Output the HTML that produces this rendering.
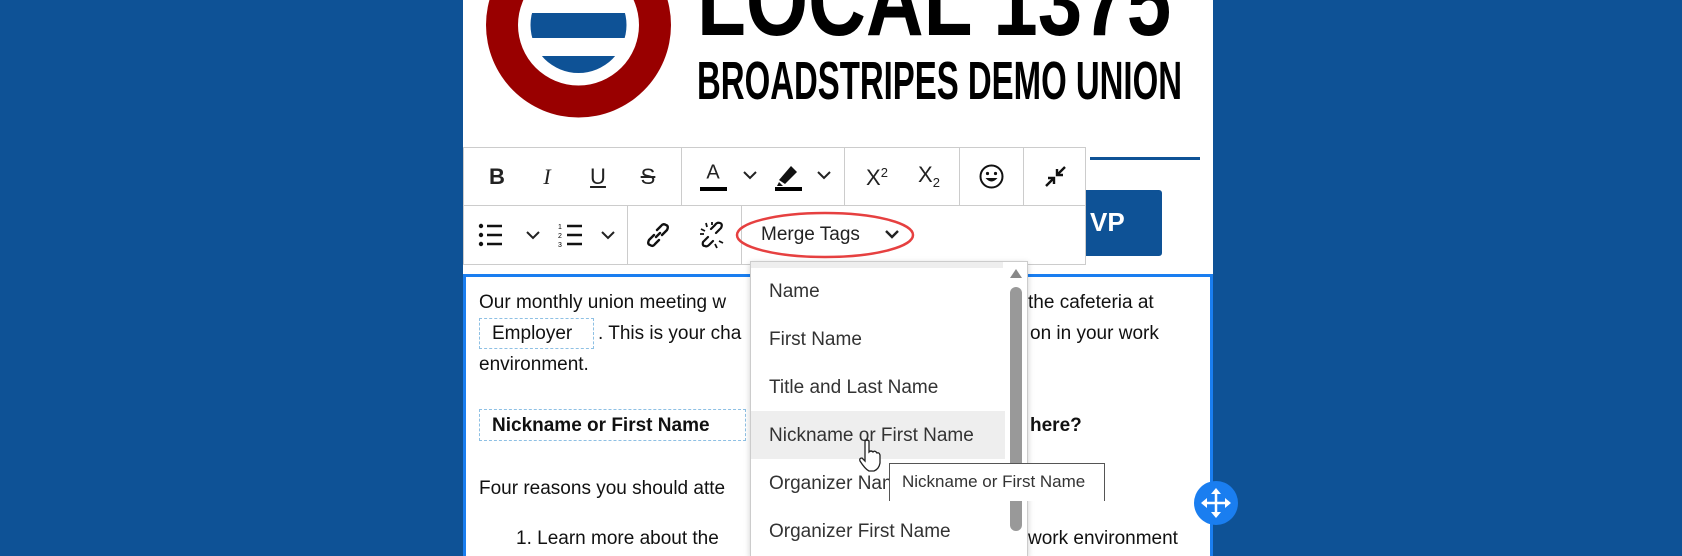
<!DOCTYPE html>
<html style="overflow:hidden;height:556px"><head><meta charset="utf-8"><style>
body{margin:0;width:1682px;height:556px;background:#0e5296;position:relative;overflow:hidden;font-family:"Liberation Sans",Arial,sans-serif}
.col{position:absolute;left:463px;top:0;width:750px;height:556px;background:#fff}
.abs{position:absolute}
.tb{position:absolute;background:#fff;border:1px solid #ccc;box-sizing:border-box}
.ic{position:absolute;font-size:22px;color:#222;transform:translate(-50%,-50%);white-space:nowrap}
.txt{position:absolute;font-size:19px;color:#111;white-space:nowrap}
.tag{position:absolute;border:1px dashed #8ec0e4;box-sizing:border-box}
.item{position:absolute;left:769px;font-size:19px;color:#333;white-space:nowrap;font-family:"Liberation Sans","DejaVu Sans",sans-serif}
</style></head><body>
<div class="col"></div>
<svg class="abs" style="left:0;top:0" width="1682" height="556">
 <circle cx="578.5" cy="25" r="92.5" fill="#990000"/>
 <circle cx="578.5" cy="25" r="60.5" fill="#fff"/>
 <clipPath id="c"><circle cx="578.5" cy="25" r="48"/></clipPath>
 <g clip-path="url(#c)" fill="#0e5296"><rect x="520" y="13" width="120" height="25"/><rect x="520" y="56" width="120" height="30"/></g>
 <rect x="1090" y="157" width="110" height="3" fill="#0e5296"/>
 <rect x="1060" y="190" width="102" height="66" rx="3" fill="#0e5296"/>
</svg>
<div class="abs" style="left:697px;top:-56px;font-size:100px;font-weight:bold;transform:scaleX(0.8);transform-origin:left top;white-space:nowrap">LOCAL 1375</div>
<div class="abs" style="left:697px;top:50px;font-size:54px;font-weight:bold;transform:scaleX(0.61);transform-origin:left top;white-space:nowrap">BROADSTRIPES DEMO UNION</div>
<div class="abs" style="left:1090px;top:207px;color:#fff;font-weight:bold;font-size:26px">VP</div>

<div class="abs" style="left:463px;top:274px;width:750px;height:282px;border:3px solid #1a7ef0;border-bottom:none;box-sizing:border-box"></div>
<div class="txt" style="left:479px;top:292px">Our monthly union meeting w</div>
<div class="txt" style="left:1028px;top:292px">the cafeteria at</div>
<div class="tag" style="left:479px;top:318px;width:115px;height:31px"></div>
<div class="txt" style="left:492px;top:323px">Employer</div>
<div class="txt" style="left:598px;top:323px">. This is your cha</div>
<div class="txt" style="left:1030px;top:323px">on in your work</div>
<div class="txt" style="left:479px;top:354px">environment.</div>
<div class="tag" style="left:479px;top:409px;width:267px;height:32px"></div>
<div class="txt" style="left:492px;top:415px;font-weight:bold">Nickname or First Name</div>
<div class="txt" style="left:1030px;top:415px;font-weight:bold">here?</div>
<div class="txt" style="left:479px;top:478px">Four reasons you should atte</div>
<div class="txt" style="left:516px;top:528px">1. Learn more about the </div>
<div class="txt" style="left:1028px;top:528px">work environment</div>

<div class="tb" style="left:463px;top:147px;width:623px;height:59px"></div>
<div class="tb" style="left:463px;top:205px;width:623px;height:60px"></div>
<div class="abs" style="left:681px;top:147px;width:1px;height:58px;background:#ccc"></div>
<div class="abs" style="left:844px;top:147px;width:1px;height:58px;background:#ccc"></div>
<div class="abs" style="left:959px;top:147px;width:1px;height:58px;background:#ccc"></div>
<div class="abs" style="left:1023px;top:147px;width:1px;height:58px;background:#ccc"></div>
<div class="abs" style="left:627px;top:205px;width:1px;height:59px;background:#ccc"></div>
<div class="abs" style="left:741px;top:205px;width:1px;height:59px;background:#ccc"></div>

<div class="ic" style="left:497px;top:177px;font-weight:bold">B</div>
<div class="ic" style="left:547px;top:177px;font-family:'Liberation Serif';font-style:italic">I</div>
<div class="ic" style="left:598px;top:177px;text-decoration:underline">U</div>
<div class="ic" style="left:648px;top:177px;text-decoration:line-through">S</div>
<div class="ic" style="left:713px;top:173px;font-size:20px">A</div>
<div class="abs" style="left:700px;top:187px;width:27px;height:4px;background:#000"></div>
<svg class="abs" style="left:742px;top:170px" width="16" height="10"><path d="M2 2 L8 8 L14 2" stroke="#222" stroke-width="2" fill="none"/></svg>
<svg class="abs" style="left:775px;top:160px" width="28" height="32"><path d="M4 20 L16 6 L22 12 L10 24 Z" fill="#111"/><path d="M4 22 L2 26 L8 26 Z" fill="#111"/><rect x="0" y="27" width="27" height="4" fill="#000"/></svg>
<svg class="abs" style="left:816px;top:170px" width="16" height="10"><path d="M2 2 L8 8 L14 2" stroke="#222" stroke-width="2" fill="none"/></svg>
<div class="ic" style="left:877px;top:178px">X<sup style="font-size:13px">2</sup></div>
<div class="ic" style="left:929px;top:176px">X<sub style="font-size:13px">2</sub></div>
<svg class="abs" style="left:979px;top:164px" width="25" height="25"><circle cx="12.5" cy="12.5" r="11" fill="none" stroke="#111" stroke-width="2"/><circle cx="8.5" cy="9.5" r="1.6" fill="#111"/><circle cx="16.5" cy="9.5" r="1.6" fill="#111"/><path d="M6.5 14 Q12.5 21 18.5 14 Z" fill="#111"/></svg>
<svg class="abs" style="left:1043px;top:164px" width="25" height="25"><path d="M22 3 L14 11 M14 5 V11 H20 M3 22 L11 14 M5 14 H11 V20" stroke="#111" stroke-width="2.4" fill="none"/></svg>

<svg class="abs" style="left:478px;top:223px" width="26" height="24"><circle cx="3" cy="3" r="2.2" fill="#111"/><circle cx="3" cy="12" r="2.2" fill="#111"/><circle cx="3" cy="21" r="2.2" fill="#111"/><path d="M9 3H24M9 12H24M9 21H24" stroke="#111" stroke-width="2.4"/></svg>
<svg class="abs" style="left:525px;top:230px" width="16" height="10"><path d="M2 2 L8 8 L14 2" stroke="#222" stroke-width="2" fill="none"/></svg>
<svg class="abs" style="left:558px;top:222px" width="26" height="26"><text x="0" y="7" font-size="7" font-family="Liberation Sans">1</text><text x="0" y="16" font-size="7" font-family="Liberation Sans">2</text><text x="0" y="25" font-size="7" font-family="Liberation Sans">3</text><path d="M9 4H24M9 13H24M9 22H24" stroke="#111" stroke-width="2.4"/></svg>
<svg class="abs" style="left:600px;top:230px" width="16" height="10"><path d="M2 2 L8 8 L14 2" stroke="#222" stroke-width="2" fill="none"/></svg>
<svg class="abs" style="left:645px;top:222px" width="26" height="26"><path d="M11 15 L15 11 M9 13 L4 18 Q2 22 5 23 Q8 25 10 22 L14 18 M17 13 L22 8 Q24 4 21 3 Q18 1 16 4 L12 8" stroke="#111" stroke-width="2.4" fill="none" stroke-linecap="round"/></svg>
<svg class="abs" style="left:698px;top:221px" width="28" height="28"><path d="M10 16 L5 21 Q4 25 7 25 Q9 26 11 24 L15 20 M18 12 L23 7 Q25 3 22 2 Q19 1 17 4 L13 8" stroke="#111" stroke-width="2.2" fill="none" stroke-linecap="round"/><path d="M3 8 L7 10 M8 2 L9 6 M21 20 L25 22 M17 23 L19 27 M2 13 L6 13 M14 1 L14 4" stroke="#111" stroke-width="1.8"/></svg>
<div class="txt" style="left:761px;top:224px;color:#222">Merge Tags</div>
<svg class="abs" style="left:884px;top:229px" width="16" height="11"><path d="M2 2 L8 8 L14 2" stroke="#222" stroke-width="2.4" fill="none"/></svg>
<svg class="abs" style="left:733px;top:208px" width="185" height="56"><ellipse cx="92" cy="27" rx="88" ry="22" fill="none" stroke="#e64040" stroke-width="2.5"/></svg>

<div class="abs" style="left:750px;top:261px;width:278px;height:295px;background:#fff;border:1px solid #ccc;border-bottom:none;box-sizing:border-box;box-shadow:0 2px 6px rgba(0,0,0,.2)"></div>
<div class="abs" style="left:751px;top:262px;width:252px;height:6px;background:#eee"></div>
<div class="abs" style="left:751px;top:411px;width:254px;height:48px;background:#eee"></div>
<div class="item" style="top:281px">Name</div>
<div class="item" style="top:329px">First Name</div>
<div class="item" style="top:377px">Title and Last Name</div>
<div class="item" style="top:425px">Nickname or First Name</div>
<div class="item" style="top:473px">Organizer Name</div>
<div class="item" style="top:521px">Organizer First Name</div>
<svg class="abs" style="left:1009px;top:266px" width="14" height="14"><path d="M1 12 L7 3 L13 12 Z" fill="#888"/></svg>
<div class="abs" style="left:1010px;top:287px;width:12px;height:244px;background:#999;border-radius:6px"></div>
<div class="abs" style="left:889px;top:463px;width:216px;height:38px;background:#fff;border:1px solid #555;border-bottom:none;box-sizing:border-box"></div>
<div class="abs" style="left:902px;top:472px;font-size:17px;color:#333;white-space:nowrap">Nickname or First Name</div>
<svg class="abs" style="left:857px;top:439px" width="26" height="34"><path d="M8 2 Q10 0 12 2 V13 Q14 11 16 13 Q18 11 20 14 Q22 13 23 16 V24 Q22 30 17 32 H12 Q8 30 3 22 Q2 19 5 19 L8 22 Z" fill="#fff" stroke="#222" stroke-width="1.3"/></svg>
<svg class="abs" style="left:1194px;top:481px" width="44" height="44"><circle cx="22" cy="22" r="22" fill="#1a7ef0"/><path d="M22 9V35M9 22H35" stroke="#fff" stroke-width="2.5"/><path d="M22 7 L17 13 H27Z M22 37 L17 31 H27Z M7 22 L13 17 V27Z M37 22 L31 17 V27Z" fill="#fff"/></svg>
</body></html>
